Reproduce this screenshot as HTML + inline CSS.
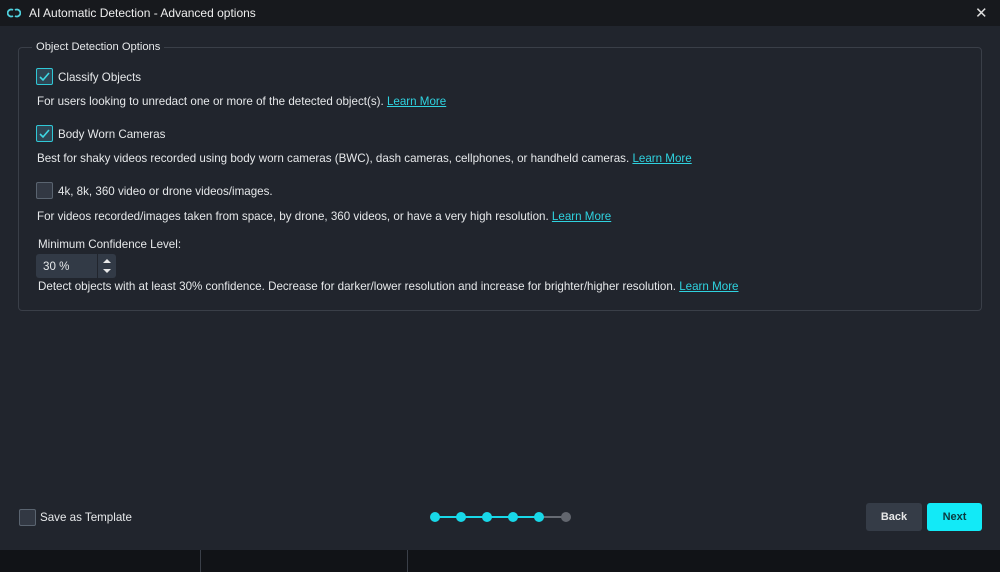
<!DOCTYPE html>
<html><head><style>
*{margin:0;padding:0;box-sizing:border-box}
body{width:1000px;height:572px;background:#21252d;font-family:"Liberation Sans",sans-serif;color:#e6e8ea;position:relative;overflow:hidden;font-size:11.6px}
.a{position:absolute;white-space:nowrap}
.tb{position:absolute;left:0;top:0;width:1000px;height:26px;background:#17191d}
.fs{position:absolute;left:18px;top:47px;width:964px;height:264px;border:1px solid #3a3f48;border-radius:4px}
.cb{position:absolute;width:17px;height:17px;border:1px solid #5a6470;border-radius:2px;background:#323843}
.cb.on{border-color:#30c8d6;background:#2e4452}
a{color:#2fd3e0;text-decoration:underline}
.btn{position:absolute;height:28px;border-radius:3px;font-weight:bold;font-size:11px;text-align:center;line-height:28px}
.dot{position:absolute;top:512px;width:10px;height:10px;border-radius:50%;background:#18d8e8}
</style></head><body>
<div class="tb"></div>
<svg class="a" style="left:7px;top:6px" width="14" height="14" viewBox="0 0 14 14"><path d="M6 4 A3.5 3.5 0 1 0 6 10 M8 10 A3.5 3.5 0 1 0 8 4" stroke="#4fd0dc" stroke-width="1.8" fill="none"/></svg>
<div class="a" style="left:29px;top:6px;font-size:12px;color:#eee">AI Automatic Detection - Advanced options</div>
<div class="a" style="left:975px;top:4px;font-size:15px;color:#ddd">✕</div>
<div class="fs"></div>
<div class="a" style="left:32px;top:41px;background:#21252d;padding:0 4px;font-size:11.2px">Object Detection Options</div>
<div class="cb on" style="left:36px;top:68px"><svg width="15" height="15"><path d="M3 8 L6 11 L12 4" stroke="#3fd8e4" stroke-width="1.6" fill="none"/></svg></div>
<div class="a" style="left:58px;top:71px">Classify Objects</div>
<div class="a" style="left:37px;top:95px">For users looking to unredact one or more of the detected object(s). <a>Learn More</a></div>
<div class="cb on" style="left:36px;top:125px"><svg width="15" height="15"><path d="M3 8 L6 11 L12 4" stroke="#3fd8e4" stroke-width="1.6" fill="none"/></svg></div>
<div class="a" style="left:58px;top:128px">Body Worn Cameras</div>
<div class="a" style="left:37px;top:152px">Best for shaky videos recorded using body worn cameras (BWC), dash cameras, cellphones, or handheld cameras. <a>Learn More</a></div>
<div class="cb" style="left:36px;top:182px"></div>
<div class="a" style="left:58px;top:185px">4k, 8k, 360 video or drone videos/images.</div>
<div class="a" style="left:37px;top:210px">For videos recorded/images taken from space, by drone, 360 videos, or have a very high resolution. <a>Learn More</a></div>
<div class="a" style="left:38px;top:238px">Minimum Confidence Level:</div>
<div class="a" style="left:36px;top:254px;width:80px;height:24px;background:#323a46;border-radius:3px"></div>
<div class="a" style="left:97px;top:254px;width:1px;height:24px;background:#21252d"></div>
<div class="a" style="left:43px;top:260px">30 %</div>
<svg class="a" style="left:101px;top:256px" width="12" height="20"><path d="M2 7 L6 3 L10 7Z M2 13 L6 17 L10 13Z" fill="#e8e8e8"/></svg>
<div class="a" style="left:38px;top:280px">Detect objects with at least 30% confidence. Decrease for darker/lower resolution and increase for brighter/higher resolution. <a>Learn More</a></div>
<div class="cb" style="left:19px;top:509px"></div>
<div class="a" style="left:40px;top:511px">Save as Template</div>
<div class="a" style="left:435px;top:516px;width:105px;height:2px;background:#18d8e8"></div>
<div class="a" style="left:540px;top:516px;width:25px;height:2px;background:#666b73"></div>
<div class="dot" style="left:430px"></div><div class="dot" style="left:456px"></div><div class="dot" style="left:482px"></div><div class="dot" style="left:508px"></div><div class="dot" style="left:534px"></div><div class="dot" style="left:561px;background:#62666e"></div>
<div class="btn" style="left:866px;top:503px;width:56px;background:#353c47;color:#e8e8e8">Back</div>
<div class="btn" style="left:927px;top:503px;width:55px;background:#12eaf7;color:#0b3a40">Next</div>
<div class="a" style="left:0;top:550px;width:1000px;height:22px;background:#111317"></div>
<div class="a" style="left:200px;top:550px;width:1px;height:22px;background:#3a3f48"></div>
<div class="a" style="left:407px;top:550px;width:1px;height:22px;background:#3a3f48"></div>
</body></html>
